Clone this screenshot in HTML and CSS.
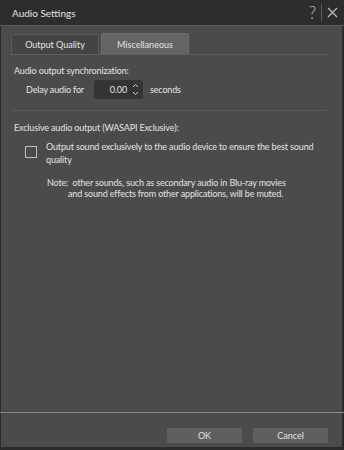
FILE: index.html
```html
<!DOCTYPE html>
<html>
<head>
	<meta charset="utf-8">
	<title>Audio Settings</title>
	<link rel="stylesheet" href="styles.css">
</head>
<body>
	<div class="dialog">
		<div class="titlebar">
			<span class="title">Audio Settings</span>
			<span class="help">?</span>
			<span class="sep"></span>
			<svg class="close" width="11" height="11" viewBox="0 0 11 11">
				<path d="M1 1 L10 10 M10 1 L1 10" stroke="#bdbdbd" stroke-width="1.2" fill="none"/>
			</svg>
		</div>
		<div class="content">
			<div class="tabs">
				<div class="tab">Output Quality</div>
				<div class="tab active">Miscellaneous</div>
			</div>
			<div class="section">
				<div class="heading">Audio output synchronization:</div>
				<div class="delay">
					<span>Delay audio for</span>
					<div class="spin">
						<span class="value">0.00</span>
						<svg class="arrows" width="7" height="13" viewBox="0 0 7 13">
							<path d="M1 4 L3.5 1.5 L6 4 M1 9 L3.5 11.5 L6 9" stroke="#cfcfcf" stroke-width="1" fill="none"/>
						</svg>
					</div>
					<span>seconds</span>
				</div>
			</div>
			<div class="section">
				<div class="heading">Exclusive audio output (WASAPI Exclusive):</div>
				<div class="check">
					<span class="box"></span>
					<span class="check-text">Output sound exclusively to the audio device to ensure the best sound quality</span>
				</div>
				<div class="note">
					<div>Note: &nbsp;other sounds, such as secondary audio in Blu-ray movies</div>
					<div class="indent">and sound effects from other applications, will be muted.</div>
				</div>
			</div>
		</div>
		<div class="footer">
			<button>OK</button>
			<button>Cancel</button>
		</div>
	</div>
</body>
</html>
```

FILE: styles.css
```css
* {
	box-sizing: border-box;
	font-family: Lato, "Noto Sans", sans-serif;
}

html, body {
	margin: 0;
	background: #2a2a2a;
}

.dialog {
	background: #4b4b4b;
	border: 1px solid #2a2a2a;
	border-width: 0 2px 3px 1px;
	color: #e3e3e3;
	display: flex;
	flex-direction: column;
	font-size: 9px;
	letter-spacing: -0.15px;
	height: 450px;
	width: 344px;
}

.titlebar {
	align-items: center;
	background: #2d2d2d;
	border-bottom: 1px solid #5c5c5c;
	display: flex;
	height: 26px;
	margin: 0 -2px 0 -1px;
	padding: 0 6px 0 12px;
}
.title {
	flex: 1;
	font-size: 10px;
	letter-spacing: 0;
}
.help {
	color: #bdbdbd;
	font-size: 17px;
	font-weight: 300;
}
.sep {
	background: #5a5a5a;
	height: 17px;
	margin: 0 5px 0 5px;
	width: 1px;
}

.content {
	flex: 1;
	padding: 8px 15px 0 10px;
}

.tabs {
	align-items: flex-end;
	border-bottom: 1px solid #5e5e5e;
	display: flex;
	gap: 2px;
	height: 21px;
}
.tab {
	align-items: center;
	background: #444;
	border: 1px solid #5a5a5a;
	border-bottom: none;
	border-radius: 2px 2px 0 0;
	display: flex;
	height: 20px;
	justify-content: center;
	letter-spacing: 0;
	width: 88px;
}
.tab.active {
	background: #646464;
	border-color: #6e6e6e;
	height: 21px;
}

.section {
	padding: 9px 0 0 3px;
}
.section + .section {
	border-top: 1px solid #5a5a5a;
	margin-top: 11px;
	padding-top: 10px;
}
.heading {
	line-height: 13px;
}

.delay {
	align-items: center;
	display: flex;
	gap: 6px;
	margin-top: 3px;
	padding-left: 12px;
}
.spin {
	align-items: center;
	background: #343434;
	border-radius: 3px;
	display: flex;
	height: 19px;
	justify-content: flex-end;
	margin: 0 1px 0 4px;
	padding: 0 4px 0 0;
	width: 49px;
}
.spin .value {
	margin-right: 5px;
}

.check {
	display: flex;
	margin-top: 6px;
	padding-left: 11px;
}
.box {
	border: 1px solid #bdbdbd;
	flex: none;
	height: 12px;
	margin-top: 6px;
	width: 12px;
}
.check-text {
	line-height: 13px;
	margin-left: 9px;
	width: 275px;
}

.note {
	line-height: 11px;
	margin-top: 11px;
	padding-left: 33px;
}
.note .indent {
	padding-left: 21px;
}

.footer {
	border-top: 1px solid #8a8a8a;
	display: flex;
	gap: 11px;
	justify-content: flex-end;
	margin: 0 -2px 0 -1px;
	padding: 15px 16px 4px 0;
}
button {
	background: #5f5f5f;
	border: none;
	color: #e3e3e3;
	font-size: 9px;
	height: 15px;
	padding: 0;
	width: 75px;
}
```
